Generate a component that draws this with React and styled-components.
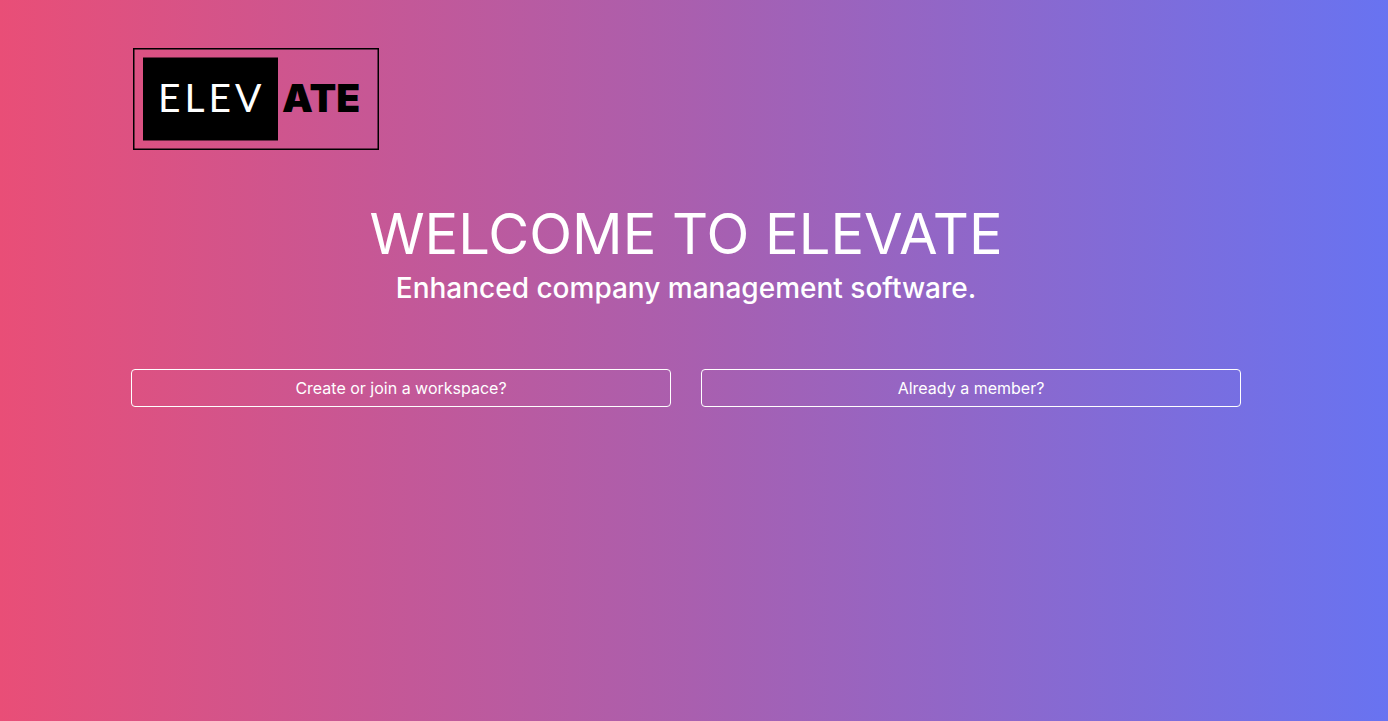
import React from "react";
import styled, { createGlobalStyle } from "styled-components";

const GlobalStyle = createGlobalStyle`
  *, *::before, *::after { box-sizing: border-box; }
  body {
    margin: 0;
    font-family: Inter, "Liberation Sans", sans-serif;
    color: #fff;
  }
`;

const Page = styled.div`
  min-height: 100vh;
  padding: 48px 16px 48px 0;
  background: linear-gradient(to right, #e94e77, #a95faf 50%, #6873f1);
`;

const Container = styled.main`
  max-width: 1140px;
  margin: 0 auto;
  padding: 0 15px;
`;

const Logo = styled.svg`
  display: block;
  width: 250px;
  height: 102px;
`;

const Hero = styled.header`
  padding-top: 50px;
  text-align: center;
`;

const Title = styled.h1`
  margin: 0;
  font-size: 56px;
  line-height: 68px;
  font-weight: 400;
`;

const Subtitle = styled.h2`
  margin: 0;
  font-size: 28px;
  line-height: 40px;
  font-weight: 500;
`;

const Actions = styled.div`
  display: grid;
  grid-template-columns: 1fr 1fr;
  gap: 30px;
  margin-top: 61px;
`;

const ActionButton = styled.button`
  padding: 6px 12px;
  border: 1px solid #fff;
  border-radius: 4px;
  background: transparent;
  color: inherit;
  font: 400 16px/24px Inter, "Liberation Sans", sans-serif;
  cursor: pointer;
`;

export default function App() {
  return (
    <Page>
      <GlobalStyle />
      <Container>
        <Logo viewBox="0 0 250 102" role="img" aria-label="Elevate">
          <rect x="2.75" y="0.75" width="244.5" height="100.5" fill="none" stroke="#000" strokeWidth="1.5" />
          <rect x="12" y="9.5" width="135" height="83" />
          <text x="27" y="64" fontFamily="Lato, sans-serif" fontSize="39" letterSpacing="4" fill="#fff">ELEV</text>
          <text x="151" y="64" fontFamily="Inter, sans-serif" fontSize="39" fontWeight="900">ATE</text>
        </Logo>
        <Hero>
          <Title>WELCOME TO ELEVATE</Title>
          <Subtitle>Enhanced company management software.</Subtitle>
        </Hero>
        <Actions>
          <ActionButton type="button">Create or join a workspace?</ActionButton>
          <ActionButton type="button">Already a member?</ActionButton>
        </Actions>
      </Container>
    </Page>
  );
}
